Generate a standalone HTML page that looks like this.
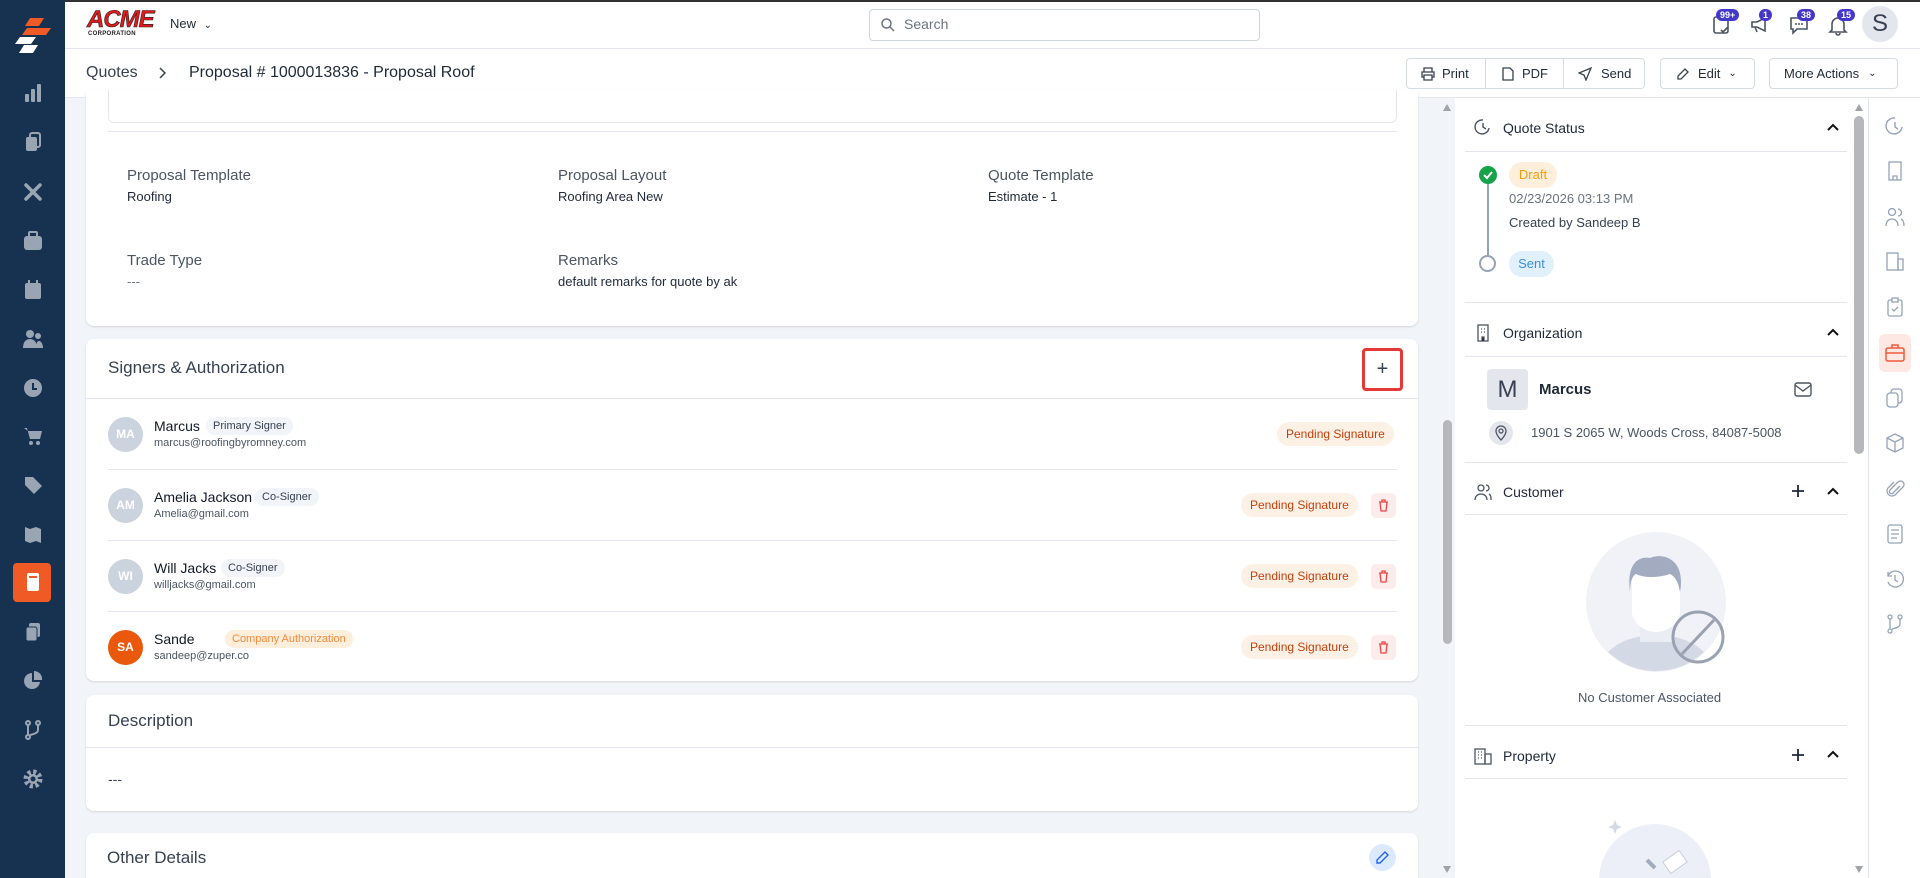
<!DOCTYPE html>
<html style="overflow:hidden;width:1920px;height:878px"><head><meta charset="utf-8"><style>
*{box-sizing:border-box;margin:0;padding:0}
body{width:1920px;height:878px;overflow:hidden;font-family:"Liberation Sans",sans-serif;background:#f1f4f8;position:relative;color:#1f2937}
.a{position:absolute}
.sb{left:0;top:0;width:65px;height:878px;background:#163250}
.hd{left:65px;top:0;width:1855px;height:49px;background:#fff;border-bottom:1px solid #e3e7ed;border-top:2px solid #333}
.bc{left:65px;top:49px;width:1855px;height:49px;background:#fff;border-bottom:1px solid #e3e7ed}
.card{background:#fff;border-radius:8px;box-shadow:0 1px 2px rgba(0,0,0,.12)}
.lbl{font-size:15px;color:#4b5563}
.val{font-size:13px;color:#1f2937}
.pend{background:#fdf1e6;color:#c2410c;height:24px;line-height:24px;padding:0 9px;font-size:12px;border-radius:12px}
.trash{width:25px;height:25px;background:#fdecec;border-radius:5px}
.av{width:35px;height:35px;border-radius:50%;background:#cbd3df;color:#fff;font-size:12px;font-weight:bold;text-align:center;line-height:35px}
.nm{font-size:14px;color:#111827}
.em{font-size:11px;color:#4b5563}
.tag{font-size:11px;background:#f1f4f8;color:#374151;padding:3px 7px;border-radius:9px}
.line{height:1px;background:#e3e7ed}
.btn{border:1px solid #d5dbe3;border-radius:4px;background:#fff;height:31px;font-size:13px;color:#1f2937;display:flex;align-items:center}
.ri{left:1884px;width:22px;height:22px}
.si{left:22px;width:22px;height:22px}
.nb{background:#4338ca;color:#fff;font-size:9px;border-radius:8px;padding:1px 4px;font-weight:bold}
.rt{font-size:14px;color:#1f2937}
.chev{left:1826px;width:14px;height:10px}
</style></head><body>
<div class="a sb"></div>
<svg class="a" style="left:14px;top:18px" width="38" height="36" viewBox="0 0 38 36"><polygon points="16,0 30,0 25,8 11,8" fill="#f05a24"/><polygon points="13,10 37,10 32,17 8,17" fill="#f05a24"/><polygon points="6,19 22,19 17,26 1,26" fill="#fff"/><polygon points="10,27 24,27 19,35 5,35" fill="#fff"/></svg>
<svg class="a si" style="top:82px" viewBox="0 0 22 22"><rect x="3" y="12" width="4" height="8" rx="1" fill="#9aa5b4"/><rect x="9" y="7" width="4" height="13" rx="1" fill="#9aa5b4"/><rect x="15" y="2" width="4" height="18" rx="1" fill="#9aa5b4"/></svg>
<svg class="a si" style="top:131px" viewBox="0 0 22 22"><rect x="4" y="6" width="11" height="14" rx="2" fill="#9aa5b4"/><rect x="8" y="2" width="10" height="14" rx="2" fill="none" stroke="#9aa5b4" stroke-width="2"/></svg>
<svg class="a si" style="top:181px" viewBox="0 0 22 22"><path d="M4 4l14 14M18 4L4 18" stroke="#9aa5b4" stroke-width="3.5" stroke-linecap="round"/></svg>
<svg class="a si" style="top:230px" viewBox="0 0 22 22"><rect x="2" y="6" width="18" height="14" rx="3" fill="#9aa5b4"/><rect x="7" y="2" width="8" height="5" rx="1" fill="none" stroke="#9aa5b4" stroke-width="2"/></svg>
<svg class="a si" style="top:279px" viewBox="0 0 22 22"><rect x="3" y="4" width="16" height="16" rx="2" fill="#9aa5b4"/><rect x="6" y="1" width="2" height="5" fill="#9aa5b4"/><rect x="14" y="1" width="2" height="5" fill="#9aa5b4"/></svg>
<svg class="a si" style="top:328px" viewBox="0 0 22 22"><circle cx="8" cy="6" r="4" fill="#9aa5b4"/><circle cx="16" cy="8" r="3" fill="#9aa5b4"/><path d="M1 20c0-6 3-9 7-9s7 3 7 9z" fill="#9aa5b4"/><path d="M14 20c0-4 1-7 3-7s4 3 4 7z" fill="#9aa5b4"/></svg>
<svg class="a si" style="top:377px" viewBox="0 0 22 22"><circle cx="11" cy="11" r="9" fill="#9aa5b4"/><path d="M11 6v6h4" stroke="#163250" stroke-width="2" fill="none"/></svg>
<svg class="a si" style="top:425px" viewBox="0 0 22 22"><path d="M2 3h3l3 11h10l2-8H6" fill="#9aa5b4"/><circle cx="9" cy="18" r="2" fill="#9aa5b4"/><circle cx="16" cy="18" r="2" fill="#9aa5b4"/></svg>
<svg class="a si" style="top:474px" viewBox="0 0 22 22"><path d="M3 3h8l9 9-8 8-9-9z" fill="#9aa5b4"/></svg>
<svg class="a si" style="top:523px" viewBox="0 0 22 22"><path d="M3 4l5 2 6-2 5 2v14l-5-2-6 2-5-2z" fill="#9aa5b4"/></svg>
<div class="a" style="left:13px;top:563px;width:38px;height:39px;background:#f05a24;border-radius:4px"></div>
<svg class="a si" style="top:571px" viewBox="0 0 22 22"><rect x="5" y="2" width="12" height="18" rx="2" fill="#fff"/><rect x="7" y="5" width="8" height="2" fill="#f05a24"/></svg>
<svg class="a si" style="top:621px" viewBox="0 0 22 22"><rect x="7" y="2" width="11" height="14" rx="2" fill="#9aa5b4"/><rect x="4" y="6" width="11" height="14" rx="2" fill="#9aa5b4" stroke="#163250" stroke-width="1"/></svg>
<svg class="a si" style="top:670px" viewBox="0 0 22 22"><path d="M10 3a8 8 0 1 0 8 9h-8z" fill="#9aa5b4"/><path d="M12 1v9h8a8 8 0 0 0-8-9z" fill="#9aa5b4"/></svg>
<svg class="a si" style="top:719px" viewBox="0 0 22 22"><circle cx="6" cy="4" r="2" fill="none" stroke="#9aa5b4" stroke-width="2"/><circle cx="6" cy="18" r="2" fill="none" stroke="#9aa5b4" stroke-width="2"/><circle cx="16" cy="4" r="2" fill="none" stroke="#9aa5b4" stroke-width="2"/><path d="M6 6v10M16 6v5c0 3-4 4-8 5" stroke="#9aa5b4" stroke-width="2" fill="none"/></svg>
<svg class="a si" style="top:768px" viewBox="0 0 22 22"><circle cx="11" cy="11" r="7" fill="none" stroke="#9aa5b4" stroke-width="5" stroke-dasharray="3 2.5"/><circle cx="11" cy="11" r="5" fill="#9aa5b4"/><circle cx="11" cy="11" r="2.5" fill="#163250"/></svg>

<div class="a hd"></div>
<div class="a" style="left:87px;top:9px;width:62px;font-weight:900;color:#e21a1a;font-size:24px;line-height:22px;letter-spacing:-1px;font-style:italic;-webkit-text-stroke:0.6px #222">ACME</div>
<div class="a" style="left:88px;top:31px;font-size:6px;font-weight:bold;color:#222;letter-spacing:.3px">CORPORATION</div>
<div class="a" style="left:170px;top:16px;font-size:13px">New <span style="font-size:10px;margin-left:4px">&#8964;</span></div>
<div class="a" style="left:869px;top:9px;width:391px;height:32px;border:1px solid #cfd5dd;border-radius:4px;background:#fff"></div>
<svg class="a" style="left:880px;top:17px" width="16" height="16" viewBox="0 0 16 16"><circle cx="6.5" cy="6.5" r="4.5" fill="none" stroke="#6b7280" stroke-width="1.5"/><path d="M10 10l4 4" stroke="#6b7280" stroke-width="1.5"/></svg>
<div class="a" style="left:904px;top:16px;font-size:14px;color:#6b7280">Search</div>
<svg class="a" style="left:1711px;top:14px" width="22" height="22" viewBox="0 0 22 22"><rect x="3" y="3" width="14" height="16" rx="2" fill="none" stroke="#4b5563" stroke-width="1.6"/><path d="M10 16l2 2 5-5" stroke="#4b5563" stroke-width="1.6" fill="none"/></svg>
<div class="a nb" style="left:1716px;top:9px">99+</div>
<svg class="a" style="left:1749px;top:14px" width="22" height="22" viewBox="0 0 22 22"><path d="M3 8h5l8-4v13l-8-4H3z" fill="none" stroke="#4b5563" stroke-width="1.6"/><path d="M6 13l2 5" stroke="#4b5563" stroke-width="1.6"/></svg>
<div class="a nb" style="left:1759px;top:9px">1</div>
<svg class="a" style="left:1788px;top:14px" width="22" height="22" viewBox="0 0 22 22"><path d="M3 4h16v11H9l-4 4v-4H3z" fill="none" stroke="#4b5563" stroke-width="1.6"/><circle cx="8" cy="10" r="1" fill="#4b5563"/><circle cx="11" cy="10" r="1" fill="#4b5563"/><circle cx="14" cy="10" r="1" fill="#4b5563"/></svg>
<div class="a nb" style="left:1797px;top:9px">38</div>
<svg class="a" style="left:1827px;top:14px" width="22" height="22" viewBox="0 0 22 22"><path d="M5 16V10a6 6 0 0 1 12 0v6l2 2H3z" fill="none" stroke="#4b5563" stroke-width="1.6"/><path d="M9 19a2 2 0 0 0 4 0" stroke="#4b5563" stroke-width="1.6" fill="none"/></svg>
<div class="a nb" style="left:1837px;top:9px">15</div>
<div class="a" style="left:1862px;top:6px;width:36px;height:36px;border-radius:50%;background:#e3e7ed;text-align:center;line-height:36px;font-size:24px;color:#374151">S</div>

<div class="a bc"></div>
<div class="a" style="left:86px;top:64px;font-size:16px;color:#374151">Quotes</div>
<svg class="a" style="left:158px;top:67px" width="8" height="12" viewBox="0 0 8 12"><path d="M2 1l5 5-5 5" stroke="#374151" stroke-width="1.5" fill="none"/></svg>
<div class="a" style="left:189px;top:64px;font-size:16px;color:#1f2937">Proposal # 1000013836 - Proposal Roof</div>
<div class="a btn" style="left:1406px;top:58px;width:239px">
 <div style="width:79px;padding-left:14px;border-right:1px solid #d5dbe3;height:100%;display:flex;align-items:center"><svg width="14" height="14" viewBox="0 0 14 14"><path d="M3 5V1h8v4M3 10H1V5h12v5h-2M3 8h8v5H3z" fill="none" stroke="#374151" stroke-width="1.3"/></svg><span style="margin-left:7px">Print</span></div>
 <div style="width:78px;padding-left:16px;border-right:1px solid #d5dbe3;height:100%;display:flex;align-items:center"><svg width="12" height="14" viewBox="0 0 12 14"><path d="M1 1h7l3 3v9H1z" fill="none" stroke="#374151" stroke-width="1.3"/></svg><span style="margin-left:8px">PDF</span></div>
 <div style="padding-left:14px;display:flex;align-items:center"><svg width="14" height="14" viewBox="0 0 14 14"><path d="M13 1L1 6l5 2 2 5z" fill="none" stroke="#374151" stroke-width="1.3"/></svg><span style="margin-left:9px">Send</span></div>
</div>
<div class="a btn" style="left:1660px;top:58px;width:95px;padding-left:15px"><svg width="14" height="14" viewBox="0 0 14 14"><path d="M9 2l3 3-7 7H2V9z" fill="none" stroke="#374151" stroke-width="1.3"/></svg><span style="margin-left:8px">Edit</span><span style="margin-left:8px;font-size:10px">&#8964;</span></div>
<div class="a btn" style="left:1769px;top:58px;width:129px;padding-left:14px">More Actions<span style="margin-left:9px;font-size:10px">&#8964;</span></div>

<div class="a card" style="left:86px;top:90px;width:1332px;height:236px;border-radius:0 0 8px 8px"></div>
<div class="a" style="left:108px;top:90px;width:1289px;height:33px;border:1px solid #e3e7ed;border-top:none;border-radius:0 0 6px 6px"></div>
<div class="a line" style="left:108px;top:131px;width:1289px"></div>
<div class="a lbl" style="left:127px;top:167px">Proposal Template</div>
<div class="a val" style="left:127px;top:189px">Roofing</div>
<div class="a lbl" style="left:558px;top:167px">Proposal Layout</div>
<div class="a val" style="left:558px;top:189px">Roofing Area New</div>
<div class="a lbl" style="left:988px;top:167px">Quote Template</div>
<div class="a val" style="left:988px;top:189px">Estimate - 1</div>
<div class="a lbl" style="left:127px;top:252px">Trade Type</div>
<div class="a val" style="left:127px;top:274px;color:#6b7280">---</div>
<div class="a lbl" style="left:558px;top:252px">Remarks</div>
<div class="a val" style="left:558px;top:274px">default remarks for quote by ak</div>

<div class="a card" style="left:86px;top:339px;width:1332px;height:342px"></div>
<div class="a" style="left:108px;top:358px;font-size:17px;color:#374151">Signers &amp; Authorization</div>
<div class="a" style="left:1362px;top:348px;width:41px;height:43px;border:3px solid #e53935;border-radius:4px;text-align:center;line-height:36px;font-size:20px;color:#374151">+</div>
<div class="a line" style="left:86px;top:398px;width:1332px"></div>

<div class="a av" style="left:108px;top:417px">MA</div>
<div class="a nm" style="left:154px;top:418px">Marcus</div>
<div class="a tag" style="left:206px;top:417px">Primary Signer</div>
<div class="a em" style="left:154px;top:437px">marcus@roofingbyromney.com</div>
<div class="a pend" style="left:1277px;top:422px">Pending Signature</div>
<div class="a line" style="left:108px;top:469px;width:1289px"></div>

<div class="a av" style="left:108px;top:488px">AM</div>
<div class="a nm" style="left:154px;top:489px">Amelia Jackson</div>
<div class="a tag" style="left:255px;top:488px">Co-Signer</div>
<div class="a em" style="left:154px;top:508px">Amelia@gmail.com</div>
<div class="a pend" style="left:1241px;top:493px">Pending Signature</div>
<div class="a trash" style="left:1371px;top:493px"></div>
<div class="a line" style="left:108px;top:540px;width:1289px"></div>

<div class="a av" style="left:108px;top:559px">WI</div>
<div class="a nm" style="left:154px;top:560px">Will Jacks</div>
<div class="a tag" style="left:221px;top:559px">Co-Signer</div>
<div class="a em" style="left:154px;top:579px">willjacks@gmail.com</div>
<div class="a pend" style="left:1241px;top:564px">Pending Signature</div>
<div class="a trash" style="left:1371px;top:564px"></div>
<div class="a line" style="left:108px;top:611px;width:1289px"></div>

<div class="a av" style="left:108px;top:630px;background:#ea580c">SA</div>
<div class="a nm" style="left:154px;top:631px">Sande</div>
<div class="a tag" style="left:225px;top:630px;background:#feeedc;color:#f58a3c">Company Authorization</div>
<div class="a em" style="left:154px;top:650px">sandeep@zuper.co</div>
<div class="a pend" style="left:1241px;top:635px">Pending Signature</div>
<div class="a trash" style="left:1371px;top:635px"></div>
<svg class="a" style="left:1377px;top:499px" width="13" height="13" viewBox="0 0 13 13"><path d="M2 3h9M5 3V1h3v2M3 3l1 9h5l1-9" fill="none" stroke="#ef4444" stroke-width="1.3"/></svg>
<svg class="a" style="left:1377px;top:570px" width="13" height="13" viewBox="0 0 13 13"><path d="M2 3h9M5 3V1h3v2M3 3l1 9h5l1-9" fill="none" stroke="#ef4444" stroke-width="1.3"/></svg>
<svg class="a" style="left:1377px;top:641px" width="13" height="13" viewBox="0 0 13 13"><path d="M2 3h9M5 3V1h3v2M3 3l1 9h5l1-9" fill="none" stroke="#ef4444" stroke-width="1.3"/></svg>

<div class="a card" style="left:86px;top:695px;width:1332px;height:116px"></div>
<div class="a" style="left:108px;top:711px;font-size:17px;color:#374151">Description</div>
<div class="a line" style="left:86px;top:747px;width:1332px"></div>
<div class="a" style="left:108px;top:771px;font-size:14px;color:#374151">---</div>

<div class="a card" style="left:86px;top:833px;width:1332px;height:45px;border-radius:8px 8px 0 0"></div>
<div class="a" style="left:107px;top:848px;font-size:17px;color:#374151">Other Details</div>
<div class="a" style="left:1369px;top:844px;width:27px;height:27px;border-radius:50%;background:#dbeafe"></div>
<svg class="a" style="left:1376px;top:851px" width="13" height="13" viewBox="0 0 13 13"><path d="M9 1l3 3-8 8H1V9z" fill="none" stroke="#2563eb" stroke-width="1.4"/></svg>

<div class="a" style="left:1439px;top:98px;width:16px;height:780px;background:#f1f4f8"></div>
<div class="a" style="left:1443px;top:420px;width:9px;height:224px;border-radius:5px;background:#b5b7bd"></div>
<div class="a" style="left:1443px;top:104px;width:0;height:0;border-left:4px solid transparent;border-right:4px solid transparent;border-bottom:7px solid #a0a3a8"></div>
<div class="a" style="left:1443px;top:866px;width:0;height:0;border-left:4px solid transparent;border-right:4px solid transparent;border-top:7px solid #a0a3a8"></div>

<div class="a" style="left:1455px;top:98px;width:413px;height:780px;background:#fff"></div>
<svg class="a" style="left:1474px;top:118px" width="18" height="18" viewBox="0 0 18 18"><path d="M15 10A7 7 0 1 1 9 2" fill="none" stroke="#4b5563" stroke-width="1.4"/><path d="M9 5v4l3 2" stroke="#4b5563" stroke-width="1.4" fill="none"/></svg>
<div class="a rt" style="left:1503px;top:120px">Quote Status</div>
<svg class="a chev" style="top:122px" viewBox="0 0 14 10"><path d="M2 8l5-5 5 5" stroke="#111" stroke-width="2" fill="none"/></svg>
<div class="a line" style="left:1465px;top:151px;width:382px"></div>
<div class="a" style="left:1479px;top:166px;width:18px;height:18px;border-radius:50%;background:#16a34a"></div>
<svg class="a" style="left:1479px;top:166px" width="18" height="18" viewBox="0 0 18 18"><path d="M5 9l3 3 5-6" stroke="#fff" stroke-width="2" fill="none"/></svg>
<div class="a" style="left:1487px;top:184px;width:2px;height:72px;background:#94a3b8"></div>
<div class="a" style="left:1479px;top:255px;width:17px;height:17px;border-radius:50%;border:2px solid #94a3b8;background:#fff"></div>
<div class="a" style="left:1509px;top:162px;width:48px;height:26px;border-radius:13px;background:#feefdc;color:#f59e0b;font-size:13px;line-height:26px;text-align:center">Draft</div>
<div class="a" style="left:1509px;top:191px;font-size:13px;color:#6b7280">02/23/2026 03:13 PM</div>
<div class="a" style="left:1509px;top:215px;font-size:13px;color:#374151">Created by Sandeep B</div>
<div class="a" style="left:1509px;top:251px;width:45px;height:26px;border-radius:13px;background:#e0f0fc;color:#3b8fd9;font-size:13px;line-height:26px;text-align:center">Sent</div>
<div class="a line" style="left:1465px;top:302px;width:382px"></div>
<svg class="a" style="left:1474px;top:324px" width="18" height="18" viewBox="0 0 18 18"><rect x="4" y="1" width="10" height="16" fill="none" stroke="#4b5563" stroke-width="1.3"/><path d="M7 5h1M10 5h1M7 8h1M10 8h1M8 17v-4h2v4" stroke="#4b5563" stroke-width="1.2"/></svg>
<div class="a rt" style="left:1503px;top:325px">Organization</div>
<svg class="a chev" style="top:327px" viewBox="0 0 14 10"><path d="M2 8l5-5 5 5" stroke="#111" stroke-width="2" fill="none"/></svg>
<div class="a line" style="left:1465px;top:356px;width:382px"></div>
<div class="a" style="left:1487px;top:369px;width:41px;height:41px;border-radius:4px;background:#e3e7ed;color:#374151;font-size:24px;text-align:center;line-height:41px">M</div>
<div class="a" style="left:1539px;top:381px;font-size:15px;font-weight:bold;color:#1f2937">Marcus</div>
<svg class="a" style="left:1794px;top:382px" width="18" height="15" viewBox="0 0 18 15"><rect x="1" y="1" width="16" height="13" rx="2" fill="none" stroke="#4b5563" stroke-width="1.4"/><path d="M1 3l8 6 8-6" stroke="#4b5563" stroke-width="1.4" fill="none"/></svg>
<div class="a" style="left:1489px;top:421px;width:24px;height:24px;border-radius:50%;background:#e3e7ed"></div>
<svg class="a" style="left:1494px;top:425px" width="14" height="16" viewBox="0 0 14 16"><path d="M7 15s5-5 5-9a5 5 0 0 0-10 0c0 4 5 9 5 9z" fill="none" stroke="#4b5563" stroke-width="1.3"/><circle cx="7" cy="6" r="2" fill="none" stroke="#4b5563" stroke-width="1.3"/></svg>
<div class="a" style="left:1531px;top:425px;font-size:13px;color:#4b5563">1901 S 2065 W, Woods Cross, 84087-5008</div>
<div class="a line" style="left:1465px;top:462px;width:382px"></div>
<svg class="a" style="left:1474px;top:483px" width="18" height="18" viewBox="0 0 18 18"><circle cx="7" cy="5" r="3" fill="none" stroke="#4b5563" stroke-width="1.3"/><path d="M1 17c0-4 3-6 6-6s6 2 6 6M12 2a3 3 0 0 1 0 6M15 11c2 1 2 3 2 6" fill="none" stroke="#4b5563" stroke-width="1.3"/></svg>
<div class="a rt" style="left:1503px;top:484px">Customer</div>
<svg class="a" style="left:1791px;top:484px" width="14" height="14" viewBox="0 0 14 14"><path d="M7 1v12M1 7h12" stroke="#1f2937" stroke-width="1.8"/></svg>
<svg class="a chev" style="top:486px" viewBox="0 0 14 10"><path d="M2 8l5-5 5 5" stroke="#111" stroke-width="2" fill="none"/></svg>
<div class="a line" style="left:1465px;top:514px;width:382px"></div>
<svg class="a" style="left:1586px;top:532px" width="145" height="145" viewBox="0 0 145 145"><circle cx="70" cy="70" r="70" fill="#f0f2f8"/><path d="M22 120c12-12 30-17 48-17s36 5 48 17a70 70 0 0 1-96 0z" fill="#d4d9e6"/><rect x="54" y="80" width="32" height="30" fill="#eaedf4"/><path d="M46 50c0-22 48-22 48 0v30c0 10-12 20-24 20S46 90 46 80z" fill="#fff"/><path d="M44 60c-4-30 10-36 20-34 14-6 36 2 30 34-2-12-6-16-10-18-12 4-26 4-34 0-4 2-6 8-6 18z" fill="#a2abbf"/><circle cx="112" cy="105" r="25" fill="none" stroke="#9aa1b0" stroke-width="3"/><path d="M96 122l32-34" stroke="#9aa1b0" stroke-width="3"/></svg>
<div class="a" style="left:1578px;top:690px;font-size:13px;color:#4b5563">No Customer Associated</div>
<div class="a line" style="left:1465px;top:725px;width:382px"></div>
<svg class="a" style="left:1474px;top:747px" width="18" height="18" viewBox="0 0 18 18"><rect x="1" y="2" width="10" height="15" fill="none" stroke="#4b5563" stroke-width="1.3"/><rect x="11" y="7" width="6" height="10" fill="none" stroke="#4b5563" stroke-width="1.3"/><path d="M4 5h1M7 5h1M4 8h1M7 8h1M4 11h1M7 11h1" stroke="#4b5563" stroke-width="1.2"/></svg>
<div class="a rt" style="left:1503px;top:748px">Property</div>
<svg class="a" style="left:1791px;top:748px" width="14" height="14" viewBox="0 0 14 14"><path d="M7 1v12M1 7h12" stroke="#1f2937" stroke-width="1.8"/></svg>
<svg class="a chev" style="top:749px" viewBox="0 0 14 10"><path d="M2 8l5-5 5 5" stroke="#111" stroke-width="2" fill="none"/></svg>
<div class="a line" style="left:1465px;top:778px;width:382px"></div>
<svg class="a" style="left:1595px;top:810px" width="120" height="68" viewBox="0 0 120 68"><circle cx="60" cy="70" r="56" fill="#eceff8"/><path d="M20 10l2 5 5 2-5 2-2 5-2-5-5-2 5-2z" fill="#d4d9e6"/><rect x="70" y="45" width="20" height="14" fill="#fff" stroke="#c8cdda" transform="rotate(-35 80 52)"/><path d="M52 50l8 8" stroke="#a2abbf" stroke-width="4"/></svg>
<div class="a" style="left:1854px;top:116px;width:10px;height:338px;border-radius:5px;background:#b5b7bd"></div>
<div class="a" style="left:1855px;top:104px;width:0;height:0;border-left:4px solid transparent;border-right:4px solid transparent;border-bottom:7px solid #a0a3a8"></div>
<div class="a" style="left:1855px;top:866px;width:0;height:0;border-left:4px solid transparent;border-right:4px solid transparent;border-top:7px solid #a0a3a8"></div>
<div class="a" style="left:1868px;top:98px;width:52px;height:780px;background:#fff;border-left:1px solid #e3e7ed"></div>
<svg class="a ri" style="top:115px" viewBox="0 0 22 22"><path d="M18 12A8 8 0 1 1 11 3" fill="none" stroke="#94a3b8" stroke-width="1.4"/><path d="M11 7v5l3 2" stroke="#94a3b8" stroke-width="1.4" fill="none"/></svg>
<svg class="a ri" style="top:160px" viewBox="0 0 22 22"><rect x="5" y="2" width="12" height="18" fill="none" stroke="#94a3b8" stroke-width="1.3"/><path d="M9 20v-4h4v4" stroke="#94a3b8" stroke-width="1.3" fill="none"/></svg>
<svg class="a ri" style="top:206px" viewBox="0 0 22 22"><circle cx="8" cy="6" r="3.5" fill="none" stroke="#94a3b8" stroke-width="1.3"/><path d="M2 20c0-5 3-7 6-7s6 2 6 7M14 3a3.5 3.5 0 0 1 0 7M17 13c2 1 3 3 3 7" fill="none" stroke="#94a3b8" stroke-width="1.3"/></svg>
<svg class="a ri" style="top:250px" viewBox="0 0 22 22"><rect x="3" y="3" width="11" height="17" fill="none" stroke="#94a3b8" stroke-width="1.3"/><rect x="14" y="9" width="5" height="11" fill="none" stroke="#94a3b8" stroke-width="1.3"/></svg>
<svg class="a ri" style="top:296px" viewBox="0 0 22 22"><rect x="4" y="4" width="14" height="16" rx="2" fill="none" stroke="#94a3b8" stroke-width="1.3"/><rect x="8" y="2" width="6" height="4" fill="#fff" stroke="#94a3b8" stroke-width="1.3"/><path d="M8 13l2 2 4-4" stroke="#94a3b8" stroke-width="1.3" fill="none"/></svg>
<div class="a" style="left:1879px;top:334px;width:32px;height:38px;border-radius:6px;background:#fde8e3"></div>
<svg class="a ri" style="top:342px" viewBox="0 0 22 22"><rect x="2" y="6" width="18" height="13" rx="2" fill="none" stroke="#ef5a3c" stroke-width="1.5"/><path d="M8 6V3h6v3M2 11h18" stroke="#ef5a3c" stroke-width="1.5" fill="none"/></svg>
<svg class="a ri" style="top:387px" viewBox="0 0 22 22"><rect x="7" y="2" width="11" height="14" rx="3" fill="none" stroke="#94a3b8" stroke-width="1.3"/><rect x="3" y="6" width="11" height="14" rx="3" fill="#fff" stroke="#94a3b8" stroke-width="1.3"/></svg>
<svg class="a ri" style="top:432px" viewBox="0 0 22 22"><path d="M11 2l8 4v10l-8 4-8-4V6zM3 6l8 4 8-4M11 10v10" fill="none" stroke="#94a3b8" stroke-width="1.3"/></svg>
<svg class="a ri" style="top:478px" viewBox="0 0 22 22"><path d="M16 8l-7 7a2 2 0 0 1-3-3l8-8a3.5 3.5 0 0 1 5 5l-8 8a5 5 0 0 1-7-7l6-6" fill="none" stroke="#94a3b8" stroke-width="1.3"/></svg>
<svg class="a ri" style="top:523px" viewBox="0 0 22 22"><rect x="4" y="2" width="14" height="18" rx="2" fill="none" stroke="#94a3b8" stroke-width="1.3"/><path d="M7 7h8M7 11h8M7 15h6" stroke="#94a3b8" stroke-width="1.3"/></svg>
<svg class="a ri" style="top:568px" viewBox="0 0 22 22"><path d="M4 8A8 8 0 1 1 4 14M4 4v4h4" fill="none" stroke="#94a3b8" stroke-width="1.3"/><path d="M11 7v5l3 2" stroke="#94a3b8" stroke-width="1.3" fill="none"/></svg>
<svg class="a ri" style="top:613px" viewBox="0 0 22 22"><circle cx="6" cy="4" r="2" fill="none" stroke="#94a3b8" stroke-width="1.3"/><circle cx="6" cy="18" r="2" fill="none" stroke="#94a3b8" stroke-width="1.3"/><circle cx="16" cy="4" r="2" fill="none" stroke="#94a3b8" stroke-width="1.3"/><path d="M6 6v10M16 6v5c0 3-4 4-8 5" stroke="#94a3b8" stroke-width="1.3" fill="none"/></svg>
</body></html>
